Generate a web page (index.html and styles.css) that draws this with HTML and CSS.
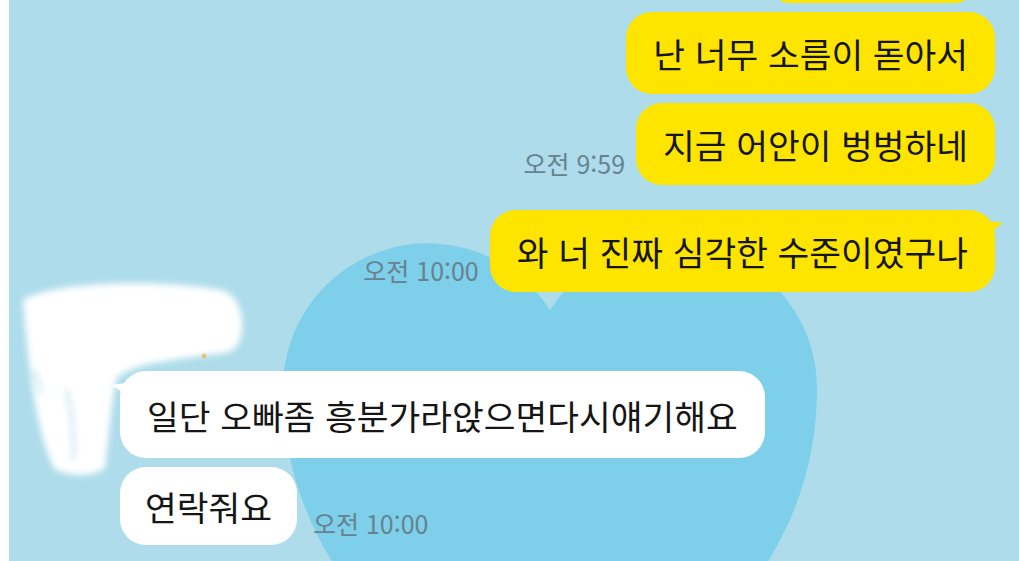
FILE: index.html
```html
<!DOCTYPE html>
<html lang="ko">
<head>
    <meta charset="UTF-8">
    <meta name="viewport" content="width=device-width, initial-scale=1.0">
    <title>채팅</title>
    <link rel="stylesheet" href="styles.css">
</head>
<body>
    <div class="screen">
        <!-- 배경 하트 + 가려진 프로필 -->
        <svg class="backdrop" width="1010" height="561" viewBox="0 0 1010 561">
            <defs>
                <filter id="soft" x="-20%" y="-20%" width="140%" height="140%">
                    <feGaussianBlur stdDeviation="3"/>
                </filter>
            </defs>
            <path class="heart" d="M541,310 A145,145 0 0 0 274,388 C274,520 345,640 541,760 C737,640 808,520 808,388 A145,145 0 0 0 541,310 Z"/>
            <g class="scribble" filter="url(#soft)">
                <path d="M14,300 C40,282 150,278 212,290 C238,296 240,345 220,352 C170,360 125,362 108,378 C102,400 100,440 96,468 C82,478 62,476 46,470 C30,440 20,380 14,300 Z"/>
                <path class="scribble-gap" d="M58,392 C64,420 66,440 64,458" />
                <path class="scribble-gap" d="M26,372 C28,380 30,386 32,392" />
            </g>
            <circle class="dot" cx="195" cy="356" r="2.5"/>
        </svg>

        <div class="chat">
            <div class="row me">
                <div class="bubble mine cut"></div>
            </div>

            <div class="row me first">
                <div class="bubble mine">난 너무 소름이 돋아서</div>
            </div>

            <div class="row me next">
                <span class="time">오전 9:59</span>
                <div class="bubble mine">지금 어안이 벙벙하네</div>
            </div>

            <div class="row me group">
                <span class="time">오전 10:00</span>
                <div class="bubble mine tail">와 너 진짜 심각한 수준이였구나</div>
            </div>

            <div class="row them group-them">
                <div class="bubble theirs tail tall">일단 오빠좀 흥분가라앉으면다시얘기해요</div>
            </div>

            <div class="row them next">
                <div class="bubble theirs short">연락줘요</div>
                <span class="time">오전 10:00</span>
            </div>
        </div>
    </div>
</body>
</html>
```

FILE: styles.css
```css
* {
    margin: 0;
    padding: 0;
    box-sizing: border-box;
}

body {
    background: #ffffff;
    font-family: "Noto Sans CJK KR", "Noto Sans", sans-serif;
    overflow: hidden;
}

.screen {
    margin-left: 9px;
    width: 1010px;
    height: 561px;
    background: #aedcea;
    position: relative;
    overflow: hidden;
}

.backdrop {
    position: absolute;
    top: 0;
    left: 0;
}

.heart {
    fill: #7dcfea;
}

.scribble path {
    fill: #ffffff;
}

.scribble .scribble-gap {
    fill: none;
    stroke: #d6eef5;
    stroke-width: 5;
    stroke-linecap: round;
}

.dot {
    fill: #e2b25a;
    opacity: 0.7;
}

.chat {
    position: relative;
    display: flex;
    flex-direction: column;
    padding: 0 24px 0 111px;
}

.row {
    display: flex;
    align-items: flex-end;
    gap: 11px;
}

.row.me {
    justify-content: flex-end;
}

.row.them {
    justify-content: flex-start;
    gap: 16px;
}

.first {
    margin-top: 9px;
}

.next {
    margin-top: 9px;
}

.group {
    margin-top: 25px;
}

.group-them {
    margin-top: 79px;
}

.bubble {
    position: relative;
    height: 82px;
    padding: 0 27px;
    border-radius: 26px;
    display: flex;
    align-items: center;
    font-size: 34.5px;
    color: #151515;
    white-space: nowrap;
}

.bubble.mine {
    background: #fee500;
}

.bubble.theirs {
    background: #ffffff;
}

.bubble.cut {
    width: 205px;
    height: 40px;
    margin-top: -37px;
    margin-right: 20px;
}

.bubble.tall {
    height: 87px;
    padding: 0 27px;
}

.bubble.short {
    height: 78px;
    padding: 0 25px;
}

.bubble.mine.tail::after {
    content: '';
    position: absolute;
    top: 11px;
    right: -8px;
    border-left: 14px solid #fee500;
    border-bottom: 10px solid transparent;
    border-top: 2px solid transparent;
}

.bubble.theirs.tail::before {
    content: '';
    position: absolute;
    top: 12px;
    left: -8px;
    border-right: 14px solid #ffffff;
    border-bottom: 10px solid transparent;
    border-top: 2px solid transparent;
}

.time {
    font-size: 25px;
    line-height: 1;
    color: #67828f;
    margin-bottom: 9px;
    white-space: nowrap;
}
```
